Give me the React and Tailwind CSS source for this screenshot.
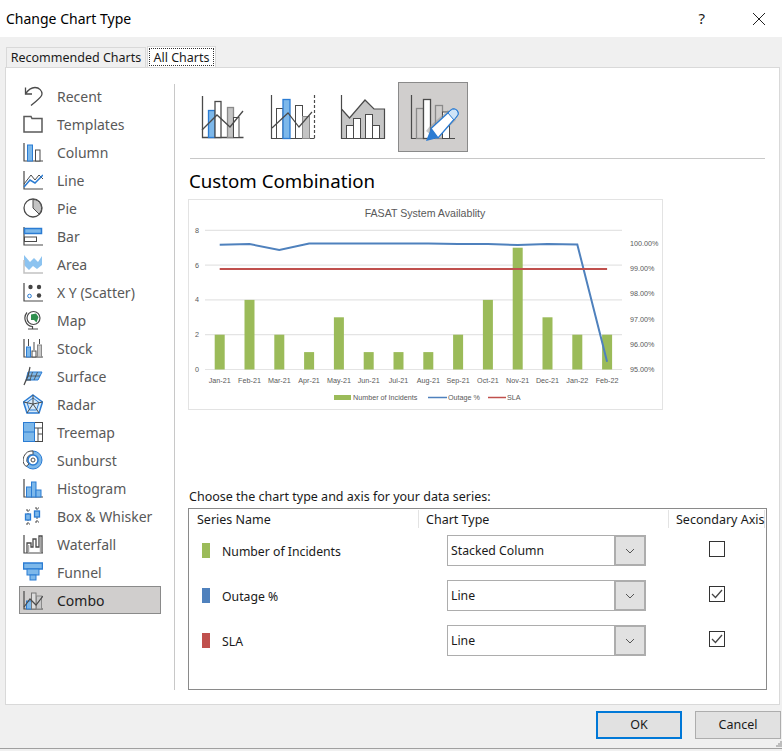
import React from "react";

const DK = "#4a4a4a";
const BL = "#2b7cd3";
const LB = "#7db8ea";

const Ic = ({ children }) => (
  <svg width="20" height="20" viewBox="0 0 20 20" fill="none" className="shrink-0">
    {children}
  </svg>
);

const Axes = () => <path d="M1 1V19H20" stroke={DK} strokeWidth="1.2" />;

const sideIcons = {
  Recent: (
    <Ic>
      <path d="M2.5 1.5V8H9" stroke={DK} strokeWidth="1.3" strokeLinejoin="miter" />
      <path d="M2.5 8C5 4 8 1.5 12 1.5C16.5 1.5 19 5 19 8C19 11 16 12.5 8 19.5" stroke={DK} strokeWidth="1.3" />
    </Ic>
  ),
  Templates: (
    <Ic>
      <path d="M1 2.5H8L9 4.5H19V18H1Z" fill="#fff" stroke="#5a5a5a" strokeWidth="1.5" />
    </Ic>
  ),
  Column: (
    <Ic>
      <Axes />
      <rect x="4.5" y="3" width="5" height="16" fill={LB} stroke={BL} />
      <rect x="12.5" y="8" width="4.5" height="11" fill="#fff" stroke={DK} />
    </Ic>
  ),
  Line: (
    <Ic>
      <Axes />
      <path d="M1 14L8 5L12 10L16 5L20 9" stroke={DK} />
      <path d="M1 17L7 10L12 13L20 5" stroke={BL} strokeWidth="1.5" />
    </Ic>
  ),
  Pie: (
    <Ic>
      <circle cx="10" cy="10" r="9" fill="#fff" stroke={DK} strokeWidth="1.3" />
      <path d="M10 1.5A8.5 8.5 0 0 1 16 16L10 10Z" fill="#c4c4c4" stroke={DK} />
    </Ic>
  ),
  Bar: (
    <Ic>
      <Axes />
      <rect x="1.5" y="2.5" width="17" height="5" fill={LB} stroke={BL} strokeWidth="1.5" />
      <rect x="1.5" y="11" width="12" height="4.5" fill="#fff" stroke={DK} />
    </Ic>
  ),
  Area: (
    <Ic>
      <path d="M1 1L7 8L11 4L15 8L19 2V11L14 15L10 12L6 16L1 11Z" fill="#8cc3f0" />
      <path d="M1 6V19H20" stroke="#c2c2c2" strokeWidth="1.5" />
    </Ic>
  ),
  "X Y (Scatter)": (
    <Ic>
      <Axes />
      <circle cx="7.5" cy="5" r="2.2" fill="#444" />
      <circle cx="16" cy="5" r="2.2" fill="#444" />
      <circle cx="16" cy="13.5" r="2.2" fill="#444" />
      <circle cx="6.5" cy="14" r="1.8" fill="#fff" stroke={BL} />
    </Ic>
  ),
  Map: (
    <Ic>
      <circle cx="10.5" cy="8" r="6.5" fill="#fff" stroke={DK} strokeWidth="1.2" />
      <path d="M8 4.5L13 3.5L15.5 7L13.5 12.5L11 10H8Z" fill="#2f8f4e" />
      <path d="M4 2.5A8.5 8.5 0 0 0 9.5 16.5V19M5 19H15" stroke={DK} strokeWidth="1.2" />
    </Ic>
  ),
  Stock: (
    <Ic>
      <Axes />
      <rect x="3.5" y="9" width="4" height="10" fill={LB} stroke={BL} />
      <rect x="9" y="13" width="4" height="6" fill="#fff" stroke={DK} />
      <rect x="14.5" y="7" width="4" height="12" fill="#c8c8c8" stroke="#8a8a8a" />
      <path d="M5.5 1V8M11 4V12M16.5 1V6" stroke={DK} />
    </Ic>
  ),
  Surface: (
    <Ic>
      <path d="M5 6H19L15 14H3Z" fill={LB} stroke={BL} />
      <path d="M9.5 6L7 14M14.5 6L11 14M4 10H17" stroke={DK} strokeWidth="0.8" />
      <path d="M7 1L5 10L1 19M1 19L3 14H8" stroke={DK} strokeWidth="1.2" />
    </Ic>
  ),
  Radar: (
    <Ic>
      <path d="M10 1L19.5 8L16 19H4L0.5 8Z" fill="#d5e9fa" stroke={BL} strokeWidth="1.5" />
      <path d="M10 4L16 8.5L13.5 16H6.5L4 8.5Z" fill="none" stroke={BL} />
      <path d="M10 1V10L16 19M10 10L4 19M10 10L0.5 8M10 10L19.5 8" stroke={DK} />
    </Ic>
  ),
  Treemap: (
    <Ic>
      <rect x="0.5" y="0.5" width="19" height="19" fill="#fff" stroke={DK} />
      <rect x="0.5" y="0.5" width="11" height="19" fill={LB} stroke={BL} />
      <path d="M0.5 10H11.5" stroke={BL} />
      <path d="M11.5 6H19.5M15 6V19.5M15 12H19.5" stroke={DK} />
    </Ic>
  ),
  Sunburst: (
    <Ic>
      <circle cx="10" cy="10" r="9" fill={LB} stroke={BL} />
      <path d="M10 1A9 9 0 0 0 3 16.5L6 14A5 5 0 0 1 10 5Z" fill="#fff" stroke={DK} />
      <circle cx="10" cy="10" r="5" fill="#fff" stroke={BL} strokeWidth="1.5" />
      <circle cx="10" cy="10" r="2" fill="#fff" stroke={DK} />
    </Ic>
  ),
  Histogram: (
    <Ic>
      <Axes />
      <rect x="3.5" y="9" width="5" height="10" fill={LB} stroke={BL} />
      <rect x="8.5" y="4" width="4.5" height="15" fill={LB} stroke={BL} />
      <rect x="13" y="12" width="5" height="7" fill={LB} stroke={BL} />
    </Ic>
  ),
  "Box & Whisker": (
    <Ic>
      <path d="M5 4V18M14 2V16M3 4H7M3 18H7M12 2H16M12 16H16" stroke={DK} strokeDasharray="2 1" />
      <rect x="2.5" y="8" width="5" height="6" fill={LB} stroke={BL} strokeWidth="1.3" />
      <rect x="11.5" y="5" width="5" height="6" fill={LB} stroke={BL} strokeWidth="1.3" />
    </Ic>
  ),
  Waterfall: (
    <Ic>
      <path d="M1 1V19H20" stroke={DK} strokeWidth="1.2" />
      <path d="M4 19V9H8V13H10V5H13V13H16V2H19V19" stroke={DK} strokeWidth="1.3" />
      <path d="M5.5 19V11M17.5 19V3" stroke="#a8a8a8" strokeWidth="1.5" />
    </Ic>
  ),
  Funnel: (
    <Ic>
      <rect x="0.5" y="1" width="19" height="6" fill={LB} stroke={BL} strokeWidth="1.5" />
      <rect x="4" y="7" width="12" height="6" fill={LB} stroke={BL} />
      <rect x="7" y="13" width="6" height="5" fill={LB} stroke={BL} />
    </Ic>
  ),
  Combo: (
    <Ic>
      <Axes />
      <rect x="3.5" y="11" width="5" height="8" fill={LB} stroke={BL} />
      <rect x="8.5" y="3" width="4.5" height="16" fill="#ddd" stroke="#777" />
      <rect x="13.5" y="6" width="5" height="13" fill="#c8c8c8" stroke="#8a8a8a" />
      <path d="M1 17L7 9L13 15L20 6" stroke={DK} strokeWidth="1.2" />
    </Ic>
  ),
};

const sideItems = Object.keys(sideIcons);

const BigIcon = ({ children, selected }) => (
  <div
    className={`w-[70px] h-[70px] border ${
      selected ? "bg-[#d0cecd] border-[#8a8a8a]" : "border-transparent"
    }`}
  >
    <svg width="68" height="68" viewBox="1 1 68 68" fill="none">
      {children}
    </svg>
  </div>
);

const months = ["Jan-21", "Feb-21", "Mar-21", "Apr-21", "May-21", "Jun-21", "Jul-21", "Aug-21", "Sep-21", "Oct-21", "Nov-21", "Dec-21", "Jan-22", "Feb-22"];
const incidents = [2, 4, 2, 1, 3, 1, 1, 1, 2, 4, 7, 3, 2, 2];
const outage = [45.7, 45, 51, 44.5, 44.5, 44.5, 44.5, 44.5, 45, 45, 46, 45, 45.5, 162.7];

// chart drawn in its own box, origin is the chart's top left corner
const Chart = () => {
  const cx = (i) => 31.7 + i * 29.8;
  const zero = 170.5;
  const unit = 17.4;
  return (
    <svg width="473" height="209" viewBox="1 1 473 209" fill="none">
      <text x="237" y="17.5" textAnchor="middle" fontSize="10.6" fill="#595959">FASAT System Availablity</text>
      {[0, 2, 4, 6, 8].map((v) => (
        <g key={v}>
          <line x1="17" x2="434" y1={zero - v * unit} y2={zero - v * unit} stroke="#e4e4e4" strokeWidth="1.2" />
          <text x="7" y={zero - v * unit + 2.5} fontSize="7.2" fill="#595959">{v}</text>
        </g>
      ))}
      {incidents.map((n, i) => (
        <rect key={i} x={cx(i) - 5} y={zero - n * unit} width="10" height={n * unit} fill="#9bbb59" />
      ))}
      {months.map((m, i) => (
        <text key={m} x={cx(i)} y="183.5" textAnchor="middle" fontSize="7.2" fill="#595959">{m}</text>
      ))}
      <polyline
        points={outage.map((y, i) => `${cx(i)},${y}`).join(" ")}
        stroke="#4f81bd"
        strokeWidth="2"
      />
      <line x1={cx(0)} x2={cx(13)} y1="70" y2="70" stroke="#c0504d" strokeWidth="2" />
      {["100.00%", "99.00%", "98.00%", "97.00%", "96.00%", "95.00%"].map((t, i) => (
        <text key={t} x="442" y={47 + i * 25.2} fontSize="7.2" fill="#595959">{t}</text>
      ))}
      <rect x="146" y="196" width="17" height="5" fill="#9bbb59" />
      <text x="165" y="201" fontSize="7.2" fill="#595959">Number of Incidents</text>
      <line x1="240" x2="259" y1="198.5" y2="198.5" stroke="#4f81bd" strokeWidth="1.5" />
      <text x="260" y="201" fontSize="7.2" fill="#595959">Outage %</text>
      <line x1="300" x2="318" y1="198.5" y2="198.5" stroke="#c0504d" strokeWidth="1.5" />
      <text x="319" y="201" fontSize="7.2" fill="#595959">SLA</text>
    </svg>
  );
};

const series = [
  { name: "Number of Incidents", color: "bg-[#9bbb59]", type: "Stacked Column", checked: false },
  { name: "Outage %", color: "bg-[#4f81bd]", type: "Line", checked: true },
  { name: "SLA", color: "bg-[#c0504d]", type: "Line", checked: true },
];

const SeriesRow = ({ item }) => (
  <div className="flex items-center h-[45px] text-[12.25px]">
    <div className="w-[258px] pl-[13px] flex items-center shrink-0">
      <div className={`w-2 h-[15px] ${item.color}`}></div>
      <span className="ml-3 pt-[4px]">{item.name}</span>
    </div>
    <div className="w-[199px] h-[31px] flex border border-[#adadad] bg-white shrink-0">
      <div className="flex-1 pl-[3px] pt-[2px] flex items-center">{item.type}</div>
      <div className="w-[32px] -my-px -mr-px bg-[#e1e1e1] border-2 border-[#adadad] flex items-center justify-center">
        <svg width="10" height="6" viewBox="0 0 10 6" fill="none">
          <path d="M1 1L5 5L9 1" stroke="#555" />
        </svg>
      </div>
    </div>
    <div className="ml-[63px] mb-[3px] w-4 h-4 border border-[#333] bg-white flex items-center justify-center">
      {item.checked && (
        <svg width="12" height="10" viewBox="0 0 12 10" fill="none">
          <path d="M1 5L4.5 8.5L11 1" stroke="#444" strokeWidth="1.3" />
        </svg>
      )}
    </div>
  </div>
);

export default function App() {
  return (
    <div className="w-[782px] h-[751px] flex flex-col bg-[#f0f0f0] overflow-hidden text-[12.5px] text-[#1a1a1a] font-['Noto_Sans',sans-serif]">
      <div className="h-[37px] bg-white flex items-center shrink-0 pl-[6px]">
        <span className="text-[14px] text-black">Change Chart Type</span>
        <span className="ml-auto mr-[47px] text-[15px]">?</span>
        <svg width="14" height="14" viewBox="0 0 14 14" fill="none" className="mr-[16px]">
          <path d="M1 1L13 13M13 1L1 13" stroke="#222" />
        </svg>
      </div>

      <div className="h-[30px] shrink-0 flex items-end pl-[6px]">
        <div className="h-[20px] w-[140px] bg-[#f0f0f0] border-t border-x border-[#d9d9d9] text-center leading-[20px]">
          Recommended Charts
        </div>
        <div className="h-[21px] w-[69px] ml-px bg-white border-t border-x border-[#d9d9d9] p-px">
          <div className="h-full border border-dotted border-[#333] text-center leading-[17px]">All Charts</div>
        </div>
      </div>

      <div className="ml-[5px] w-[775px] h-[638px] shrink-0 bg-white border border-[#d9d9d9] flex">
        <div className="w-[168px] shrink-0 pt-[14px] pl-[13px]">
          {sideItems.map((name) => (
            <div
              key={name}
              className={`w-[142px] h-[28px] pl-[3px] flex items-center gap-[14px] text-[14px] border ${
                name === "Combo" ? "bg-[#d0cecd] border-[#8a8a8a] text-[#222]" : "border-transparent text-[#595959]"
              }`}
            >
              {sideIcons[name]}
              <span>{name}</span>
            </div>
          ))}
        </div>
        <div className="w-px mt-[16px] mb-[14px] bg-[#c8c8c8] shrink-0"></div>

        <div className="flex-1 flex flex-col pt-[14px] pl-[13px] pr-[12px] pb-[14px]">
          <div className="flex">
            <BigIcon>
              <path d="M14.5 14V55.5H55.5" stroke={DK} strokeWidth="1.3" />
              <rect x="20.5" y="28.5" width="6.5" height="27" fill={LB} stroke={BL} strokeWidth="1.3" />
              <rect x="27" y="19.5" width="6" height="36" fill="#fff" stroke={DK} strokeWidth="1.3" />
              <rect x="39.5" y="25.5" width="6" height="30" fill="#c4c4c4" stroke="#8a8a8a" strokeWidth="1.3" />
              <rect x="45.5" y="35.5" width="5.5" height="20" fill="#fff" stroke={DK} />
              <path d="M14 48L29 33L42 45L55 29" stroke={DK} strokeWidth="1.3" />
            </BigIcon>
            <BigIcon>
              <path d="M13.5 13V56.5H56.5" stroke={DK} strokeWidth="1.2" />
              <path d="M56.5 13V56" stroke={DK} strokeWidth="1.2" strokeDasharray="3 2" />
              <rect x="18.5" y="26.5" width="6.5" height="30" fill="#fff" stroke={DK} />
              <rect x="25" y="17.5" width="7" height="39" fill={LB} stroke={BL} strokeWidth="1.3" />
              <rect x="37.5" y="23.5" width="7" height="33" fill="#fff" stroke={DK} />
              <rect x="44.5" y="34.5" width="7" height="22" fill="#c4c4c4" stroke="#8a8a8a" />
              <path d="M14 46L30 31L41 45L54 30" stroke={DK} strokeWidth="1.2" />
            </BigIcon>
            <BigIcon>
              <path d="M13.5 27L21.5 36L37 18L46 27H56.5V56H13.5Z" fill="#c6c6c6" />
              <path d="M13.5 13V56.5H56.5V27H46L37 18L21.5 36L13.5 27" stroke={DK} strokeWidth="1.2" />
              <rect x="18.5" y="43.5" width="7" height="13" fill="#fff" stroke={DK} />
              <rect x="25.5" y="36.5" width="7" height="20" fill="#fff" stroke={DK} />
              <rect x="37.5" y="32.5" width="7" height="24" fill="#fff" stroke={DK} />
              <rect x="44.5" y="43.5" width="7" height="13" fill="#fff" stroke={DK} />
            </BigIcon>
            <BigIcon selected>
              <path d="M13.5 13V56.5H57" stroke={DK} strokeWidth="1.2" />
              <rect x="18.5" y="26.5" width="7" height="30" fill="#d0cecd" stroke="#8a8a8a" strokeWidth="1.3" />
              <rect x="25.5" y="17.5" width="7" height="39" fill="#fff" stroke={DK} strokeWidth="1.3" />
              <rect x="37.5" y="23.5" width="7" height="33" fill="#d0cecd" stroke="#8a8a8a" strokeWidth="1.3" />
              <rect x="44.5" y="30" width="7" height="26.5" fill="#fff" stroke={DK} />
              <path d="M28 49L32 44L50 28L58 38L38 57Z" fill="#8f8f8f" opacity="0.5" />
              <path d="M33 46.5L53 28C55 26.5 57.5 27 59 28.5C60.5 30.5 60.5 32.5 59 34L40 56Z" fill="#fff" stroke={BL} strokeWidth="1.3" />
              <path d="M53 28C55 26.5 57.5 27 59 28.5C60.5 30.5 60.5 32.5 59 34L56 38L50 31Z" fill="#cfe4f7" stroke={BL} />
              <path d="M33 46.5L28 59L40 56Z" fill={BL} />
            </BigIcon>
          </div>
          <div className="mt-[6px] mx-[2px] h-px bg-[#c8c8c8]"></div>
          <div className="mt-[8px] h-[28px] pl-px leading-[28px] text-[18.7px] text-black">Custom Combination</div>
          <div className="mt-[4px] w-[475px] h-[211px] border border-[#e3e3e3] font-['Liberation_Sans',sans-serif]">
            <Chart />
          </div>

          <div className="mt-auto h-[20px] pl-px leading-[22px]">Choose the chart type and axis for your data series:</div>
          <div className="mt-[2px] h-[182px] border border-[#8a8a8a] flex flex-col">
            <div className="flex mt-px h-[18px] leading-[20px] shrink-0 whitespace-nowrap">
              <div className="w-[230px] pl-[8px] border-r border-[#e3e3e3]">Series Name</div>
              <div className="w-[250px] pl-[7px] border-r border-[#e3e3e3]">Chart Type</div>
              <div className="w-[96px] pl-[7px] border-r border-[#e3e3e3]">Secondary Axis</div>
            </div>
            {series.map((item) => (
              <SeriesRow key={item.name} item={item} />
            ))}
          </div>
        </div>
      </div>

      <div className="relative flex-1 flex justify-end items-start pt-[6px] pr-[1px] gap-[13px] mb-[2px] border-b border-[#a0a0a0]">
        <button className="w-[86px] h-[28px] bg-[#e1e1e1] border-2 border-[#0078d7]">OK</button>
        <button className="w-[86px] h-[28px] bg-[#e1e1e1] border border-[#adadad]">Cancel</button>
        <svg width="6" height="6" viewBox="0 0 6 6" className="absolute right-0 bottom-[1px]">
          <path d="M4 0h2v2h-2zM2 2h2v2h-2zM4 2h2v2h-2zM0 4h2v2h-2zM2 4h2v2h-2zM4 4h2v2h-2z" fill="#bdbdbd" />
        </svg>
      </div>
    </div>
  );
}
